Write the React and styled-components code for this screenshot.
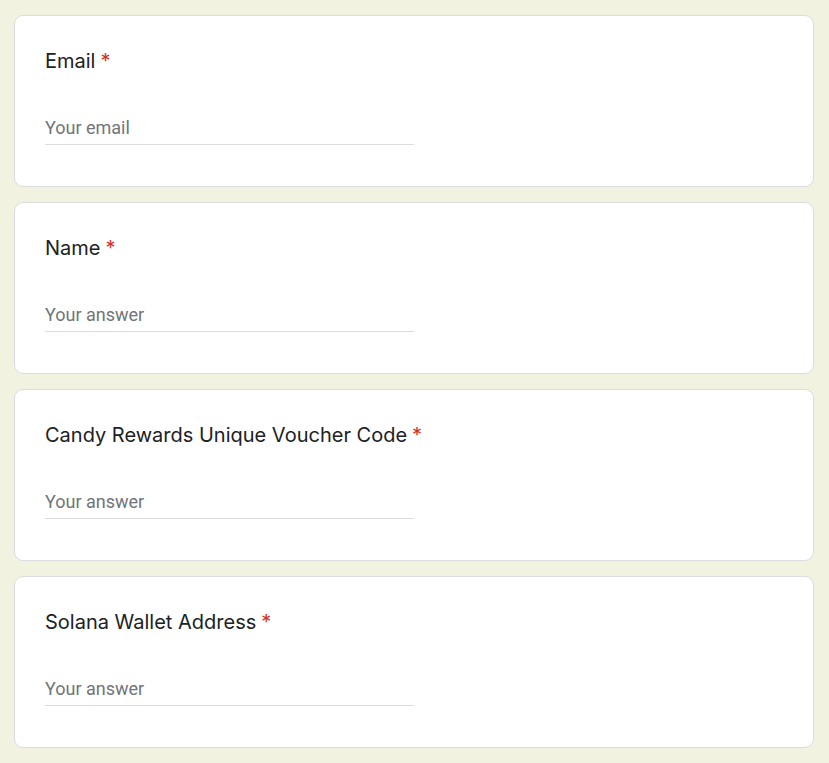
import React from 'react'
import styled, { createGlobalStyle } from 'styled-components'

const GlobalStyle = createGlobalStyle`
  html, body {
    margin: 0;
    padding: 0;
    background: #f2f2e0;
  }
`

const Page = styled.main`
  display: flex;
  flex-direction: column;
  gap: 15px;
  padding: 15px 15px 14px 14px;
  min-height: 763px;
  box-sizing: border-box;
`

const Card = styled.section`
  background: #fff;
  border: 1px solid #dadce0;
  border-radius: 9px;
  padding: 33px 30px 41px;
  display: flex;
  flex-direction: column;
  gap: 43px;
`

const Title = styled.div`
  font-family: Inter, "Liberation Sans", sans-serif;
  font-size: 20px;
  line-height: 24px;
  color: #202124;
`

const Star = styled.span`
  color: #d93025;
  margin-left: 5px;
`

const Field = styled.div`
  width: 369px;
  border-bottom: 1px solid #dadce0;
  padding-bottom: 4px;
  font-family: Roboto, "Liberation Sans", sans-serif;
  font-size: 18px;
  line-height: 24px;
  color: #70757a;
`

const questions = [
  { title: 'Email', placeholder: 'Your email' },
  { title: 'Name', placeholder: 'Your answer' },
  { title: 'Candy Rewards Unique Voucher Code', placeholder: 'Your answer' },
  { title: 'Solana Wallet Address', placeholder: 'Your answer' }
]

export default function App () {
  return (
    <>
      <GlobalStyle />
      <Page>
        {questions.map(q => (
          <Card key={q.title}>
            <Title>
              {q.title}
              <Star>*</Star>
            </Title>
            <Field>{q.placeholder}</Field>
          </Card>
        ))}
      </Page>
    </>
  )
}
